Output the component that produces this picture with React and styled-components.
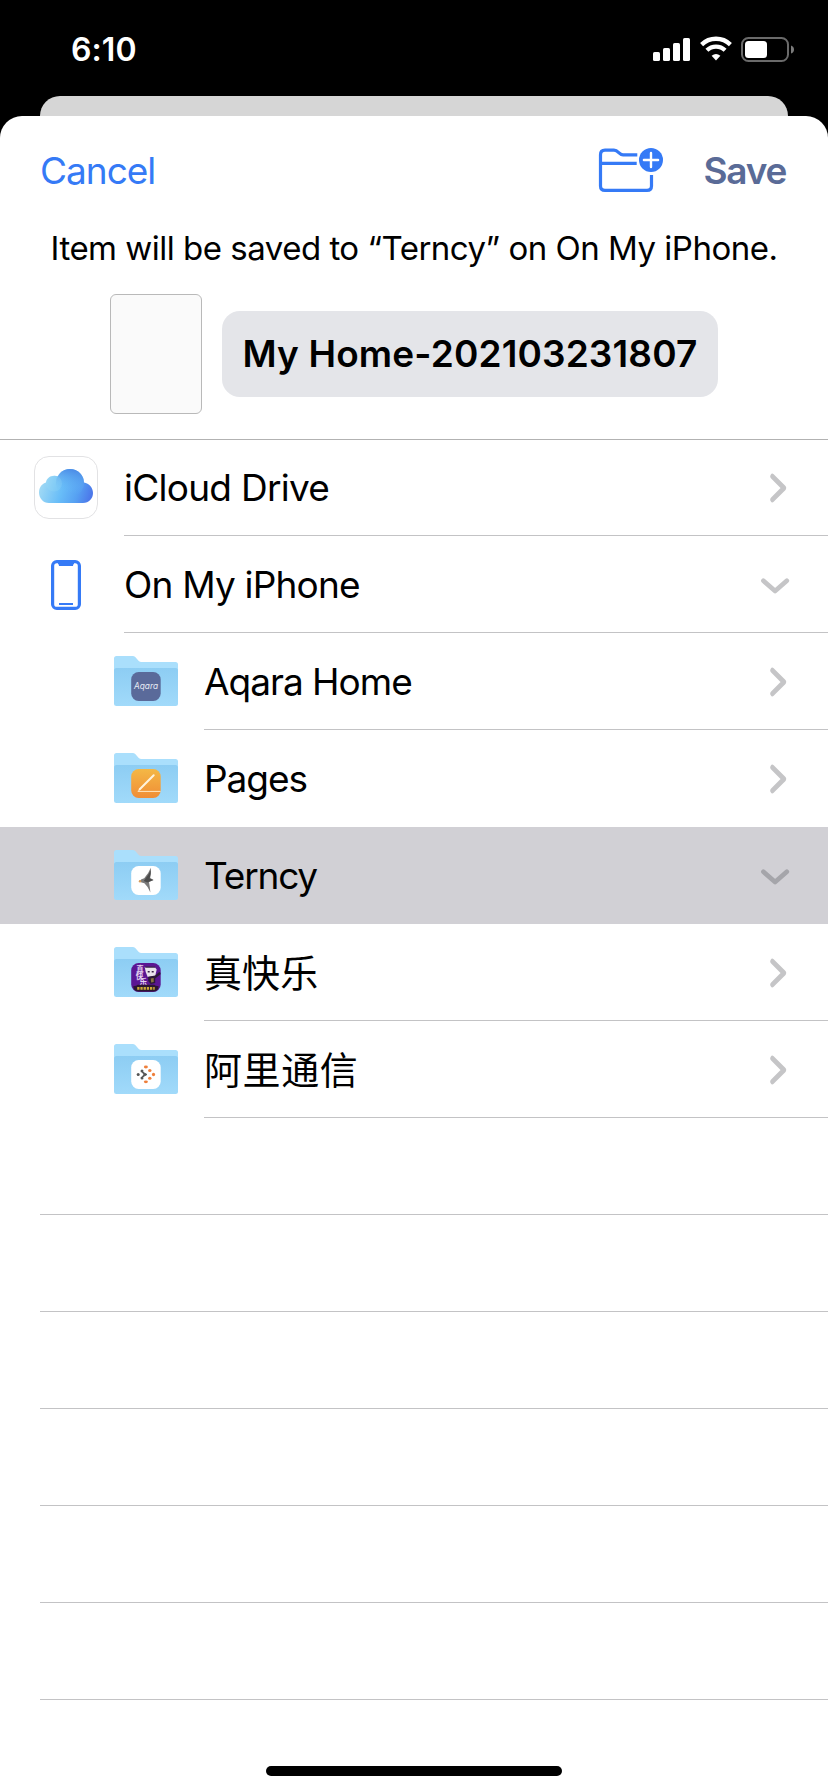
import React from "react";
import styled, { createGlobalStyle } from "styled-components";

const BLUE = "#357af6";

const GlobalStyle = createGlobalStyle`
  * { box-sizing: border-box; }
  body {
    margin: 0;
    background: #000;
    font-family: Inter, "Noto Sans CJK SC", sans-serif;
    color: #000;
  }
  svg { display: block; flex: none; }
`;

const Screen = styled.main`
  width: 828px;
  height: 1792px;
  display: flex;
  flex-direction: column;
  background: #000;
  overflow: hidden;
`;

const StatusBar = styled.header`
  height: 96px;
  flex: none;
  display: flex;
  justify-content: space-between;
  padding: 30px 33px 0 71px;
`;

const Clock = styled.time`
  font-size: 32px;
  line-height: 40px;
  font-weight: 600;
  letter-spacing: 0.1px;
  color: #fff;
`;

const StatusIcons = styled.div`
  display: flex;
  align-items: flex-start;
  gap: 9px;
  padding-top: 6px;
`;

const BackCard = styled.div`
  flex: none;
  height: 20px;
  margin: 0 40px;
  border-radius: 20px 20px 0 0;
  background: #d6d6d6;
`;

const Sheet = styled.section`
  flex: 1;
  display: flex;
  flex-direction: column;
  border-radius: 22px 22px 0 0;
  background: #fff;
`;

const NavBar = styled.nav`
  height: 109px;
  flex: none;
  display: flex;
  align-items: center;
  padding: 0 42px 0 40px;
`;

const NavButton = styled.button`
  border: 0;
  padding: 0;
  background: none;
  font: inherit;
  font-size: 37px;
  line-height: 48px;
  font-weight: ${(p) => (p.$strong ? 600 : 400)};
  letter-spacing: ${(p) => (p.$strong ? "-1.3px" : "-1px")};
  color: ${(p) => (p.$strong ? "#5a6b97" : BLUE)};
`;

const NewFolderButton = styled.button`
  border: 0;
  padding: 0;
  background: none;
  margin: 0 39.5px 1px auto;
`;

const Message = styled.p`
  margin: 0;
  height: 46px;
  text-align: center;
  font-size: 33px;
  line-height: 46px;
  letter-spacing: -0.5px;
  white-space: nowrap;
`;

const FileRow = styled.div`
  height: 169px;
  flex: none;
  display: flex;
  align-items: center;
  gap: 20px;
  padding: 0 110px 3px;
  border-bottom: 1px solid #b2b2b2;
`;

const Thumbnail = styled.div`
  width: 92px;
  height: 120px;
  flex: none;
  border: 1px solid #b9b9b9;
  border-radius: 6px;
  background: #fafafa;
`;

const NameField = styled.div`
  width: 496px;
  height: 86px;
  flex: none;
  padding-left: 20.5px;
  border-radius: 18px;
  background: #e4e5e9;
  font-size: 37px;
  line-height: 86px;
  font-weight: 600;
  letter-spacing: 0.14px;
  white-space: nowrap;
`;

const List = styled.ul`
  list-style: none;
  margin: 0;
  padding: 0;
`;

const Row = styled.li`
  height: ${(p) => (p.$first ? 96 : 97)}px;
  display: flex;
  gap: 26px;
  padding-left: ${(p) => (p.$nested ? 114 : 34)}px;
  background: ${(p) => (p.$selected ? "#d1d0d5" : "transparent")};
`;

const IconCell = styled.div`
  width: 64px;
  flex: none;
  display: flex;
  align-items: center;
  justify-content: center;
  padding-top: ${(p) => (p.$low ? 1 : 0)}px;
  padding-bottom: ${(p) => (p.$low ? 0 : 1)}px;
`;

const RowBody = styled.div`
  flex: 1;
  display: flex;
  align-items: center;
  justify-content: space-between;
  padding-top: ${(p) => (p.$first ? 0 : 2)}px;
  padding-right: 38px;
  border-bottom: 1px solid ${(p) => (p.$line ? "#c3c3c5" : "transparent")};
`;

const Label = styled.span`
  font-size: ${(p) => (p.$cjk ? 38 : 37)}px;
  line-height: 48px;
  letter-spacing: ${(p) => p.$tracking}px;
  white-space: nowrap;
`;

const EmptyRow = styled.li`
  height: 97px;
  margin-left: 40px;
  border-bottom: 1px solid #c3c3c5;
`;

const HomeIndicator = styled.div`
  width: 296px;
  height: 10px;
  margin: auto auto 16px;
  border-radius: 5px;
  background: #000;
`;

const Signal = () => (
  <svg width="38" height="25" viewBox="0 0 38 25" fill="#fff">
    <rect x="0" y="16" width="7" height="9" rx="1.6" />
    <rect x="10" y="12" width="7" height="13" rx="1.6" />
    <rect x="20" y="7" width="7" height="18" rx="1.6" />
    <rect x="30" y="2" width="7" height="23" rx="1.6" />
  </svg>
);

const Wifi = () => (
  <svg width="32" height="25" viewBox="0 0 32 25" fill="none" stroke="#fff">
    <path d="M1.6 8.6A20.6 20.6 0 0 1 30.4 8.6" strokeWidth="4.3" />
    <path d="M6.9 14.3A13 13 0 0 1 25.1 14.3" strokeWidth="4.2" />
    <path d="M11.6 19.8Q16 16.2 20.4 19.8L16 24.4Z" fill="#fff" stroke="none" />
  </svg>
);

const Battery = () => (
  <svg width="54" height="26" viewBox="0 0 54 26">
    <rect x="1" y="2" width="46" height="23" rx="6.5" fill="none" stroke="#6a6a6a" strokeWidth="2" />
    <rect x="4" y="5" width="22" height="17" rx="3.5" fill="#fff" />
    <path d="M50 9.5Q53 10.5 53 13.5T50 17.5Z" fill="#7b7b7b" />
  </svg>
);

const NewFolderIcon = () => (
  <svg width="66" height="46" viewBox="0 0 66 46" fill="none" stroke={BLUE} strokeWidth="3.2">
    <path d="M39.3 7.8H25C20.8 7.8 20.6 3.2 16 3.2H7Q2.5 3.2 2.5 7.7V39Q2.5 43.4 7 43.4H49Q53.5 43.4 53.5 39V28" />
    <path d="M2.5 16.4H38.7" />
    <circle cx="53" cy="13" r="12" fill={BLUE} stroke="none" />
    <path d="M53 5.9V20.1M45.9 13H60.1" stroke="#fff" strokeWidth="2.4" strokeLinecap="round" />
  </svg>
);

const CloudIcon = () => (
  <svg width="64" height="63" viewBox="0 0 64 63">
    <defs>
      <linearGradient id="cloud" x1="0" y1="0.4" x2="1" y2="0.6">
        <stop offset="0" stopColor="#a6dcf4" />
        <stop offset="0.45" stopColor="#68bdf8" />
        <stop offset="0.75" stopColor="#56a0f2" />
        <stop offset="1" stopColor="#4c78ea" />
      </linearGradient>
      <linearGradient id="puff" x1="0.6" y1="0" x2="0.4" y2="1">
        <stop offset="0" stopColor="#4b8ae6" />
        <stop offset="0.85" stopColor="#67bcf8" stopOpacity="0" />
      </linearGradient>
    </defs>
    <rect x="0.5" y="0.5" width="63" height="62" rx="14.5" fill="#fff" stroke="#e2e2e4" />
    <path
      d="M15 47C9 47 5 42 5 36.5C5 31 8.3 27.5 12 26.5C12.5 21.500 18 18.3 24 20.2C26.5 15.5 31 13 36 13C43.5 13 49.5 18.5 50 26.5C55 27.5 59 31.5 59 37C59 42.5 55 47 49 47Z"
      fill="url(#cloud)"
    />
    <circle cx="36" cy="27" r="14" fill="url(#puff)" />
    <circle cx="20" cy="27.5" r="8" fill="#9ce0f8" opacity="0.22" />
  </svg>
);

const PhoneIcon = () => (
  <svg width="30" height="50" viewBox="0 0 30 50">
    <rect x="1.6" y="1.6" width="26.8" height="46.8" rx="4.2" fill="none" stroke={BLUE} strokeWidth="3.2" />
    <path d="M7 2H23V4Q22 4 22 6H8Q8 4 7 4Z" fill={BLUE} />
    <path d="M8 44H22" stroke={BLUE} strokeWidth="2" />
  </svg>
);

const AqaraBadge = () => (
  <>
    <rect width="29.5" height="29" rx="7.5" fill="#5a6a9a" />
    <text x="14.8" y="16.6" textAnchor="middle" fontSize="8.6" textLength="24" lengthAdjust="spacingAndGlyphs" fill="#e6eaf4" fontStyle="italic">
      Aqara
    </text>
  </>
);

const PagesBadge = () => (
  <>
    <defs>
      <linearGradient id="pages" x1="0" y1="0" x2="0" y2="1">
        <stop offset="0" stopColor="#f4b845" />
        <stop offset="1" stopColor="#f08d36" />
      </linearGradient>
    </defs>
    <rect width="29.5" height="29" rx="7.5" fill="url(#pages)" />
    <path d="M8.5 20.3L22.5 6.3" stroke="#fff3dc" strokeWidth="2" strokeLinecap="round" />
    <path d="M6.5 22.4H29.3" stroke="#ffe9c4" strokeWidth="1" />
    <path d="M6.8 22.2L8.2 19.6L9.4 20.8Z" fill="#fff3dc" />
  </>
);

const TerncyBadge = () => (
  <>
    <rect width="29.5" height="29" rx="7.5" fill="#fff" />
    <path d="M8 15.5Q10 12.800 13 12.300Q17.200 8 19.600 1.800Q20.300 6.500 19 12L22.300 14L17.800 16Q18.800 21.500 19.200 26.500Q16.800 20.500 13.200 17.300Q10.500 16.800 8 15.500Z" fill="#7a7a7a" />
    <path d="M15 11.500Q18 8 19.400 4Q19.700 8 18.400 12.500L22.300 14L16 16.500L12.500 15Z" fill="#4c4c4c" />
    <circle cx="8.8" cy="15.3" r="1.2" fill="#d39a5a" />
  </>
);

const HappyBadge = () => (
  <>
    <rect width="29.5" height="29" rx="7.5" fill="#5b1693" />
    <g fill="#e4d3f0" fontSize="7.5" fontWeight="700">
      <text x="5" y="8.6">真</text>
      <text x="4.6" y="15.8">快</text>
      <text x="8.4" y="22">乐</text>
    </g>
    <path d="M13.500 4H23.5L25.5 6.5L24 13L16.500 14L14.5 9Z" fill="#eae4ec" />
    <path d="M14 3.500H24V4.700H14ZM16.500 8H18.5V9.4H16.500ZM20.5 8H22.500V9.4H20.5Z" fill="#3a2448" />
    <path d="M17 13.800L24 12.5L28 9L29.3 9.7V11.2L24 15.500V20L19.500 21L17 18Z" fill="#2c1a36" />
    <path d="M19.5 15.5L22.5 15V19L20 19.5Z" fill="#8a7440" />
    <path d="M2 23.200L5 22.800L6.500 21.800H23L24.500 22.800L27.500 23.200Q27 28.600 22 28.600H7.5Q2.500 28.600 2 23.200Z" fill="#2c1730" />
    <path d="M6 25.400H23.500" stroke="#cdaa38" strokeWidth="2.600" strokeDasharray="2.300 0.900" />
  </>
);

const AliBadge = () => (
  <>
    <rect width="29.5" height="29" rx="7.5" fill="#fff" />
    <g fill="#ee7f3b">
      <ellipse cx="14.7" cy="7" rx="2" ry="1.4" />
      <ellipse cx="18.6" cy="10.6" rx="1.7" ry="1.5" />
      <ellipse cx="22.3" cy="14.5" rx="1.6" ry="1.7" />
      <ellipse cx="18.6" cy="18.3" rx="1.7" ry="1.5" />
      <ellipse cx="14.7" cy="21.8" rx="2" ry="1.4" />
    </g>
    <g fill="#555">
      <circle cx="7" cy="14.5" r="1.5" />
      <circle cx="10.8" cy="10.9" r="1.5" />
      <circle cx="10.8" cy="18.1" r="1.5" />
      <path d="M11.2 12L15.8 14.5L11.2 17L12.6 14.5Z" stroke="#555" strokeWidth="1" />
    </g>
  </>
);

const FolderIcon = ({ children }) => (
  <svg width="64" height="50" viewBox="0 0 64 50">
    <defs>
      <linearGradient id="front" x1="0" y1="0" x2="0" y2="1">
        <stop offset="0" stopColor="#8dcdf3" />
        <stop offset="1" stopColor="#a1dafa" />
      </linearGradient>
    </defs>
    <path d="M0 2.5Q0 0 2.5 0H18.5Q20.3 0 21.5 1.3L24.5 4.7Q25.8 6 27.5 6H61.5Q64 6 64 8.5V20H0Z" fill="#aadffc" />
    <path d="M0 14.5Q0 12 2.5 12H61.5Q64 12 64 14.5V47.5Q64 50 61.5 50H2.5Q0 50 0 47.5Z" fill="url(#front)" />
    <g transform="translate(17.2 16)">{children}</g>
  </svg>
);

const ChevronRight = () => (
  <svg width="20" height="30" viewBox="0 0 20 30">
    <path d="M2.4 6.2L14 15L2.4 23.8" transform="matrix(1 0 0 1.32 0 -4.8)" fill="none" stroke="#c5c5c7" strokeWidth="4.2" strokeLinecap="round" strokeLinejoin="round" />
  </svg>
);

const ChevronDown = ({ color }) => (
  <svg width="30" height="20" viewBox="0 0 30 20">
    <path d="M3.4 5.8L15.1 16L26.8 5.8" fill="none" stroke={color} strokeWidth="4.7" strokeLinecap="round" strokeLinejoin="round" />
  </svg>
);

const LOCATIONS = [
  { name: "iCloud Drive", icon: <CloudIcon />, tracking: -0.73, line: true },
  { name: "On My iPhone", icon: <PhoneIcon />, tracking: -0.81, line: true, open: true },
  { name: "Aqara Home", badge: <AqaraBadge />, tracking: -1, line: true },
  { name: "Pages", badge: <PagesBadge />, tracking: -1.05 },
  { name: "Terncy", badge: <TerncyBadge />, tracking: -1.2, open: true, selected: true },
  { name: "真快乐", badge: <HappyBadge />, tracking: 0.1, line: true, cjk: true },
  { name: "阿里通信", badge: <AliBadge />, tracking: 0.6, line: true, cjk: true },
];

export default function App() {
  return (
    <>
      <GlobalStyle />
      <Screen>
        <StatusBar>
          <Clock>6:10</Clock>
          <StatusIcons>
            <Signal />
            <Wifi />
            <Battery />
          </StatusIcons>
        </StatusBar>
        <BackCard />
        <Sheet>
          <NavBar>
            <NavButton>Cancel</NavButton>
            <NewFolderButton aria-label="New folder">
              <NewFolderIcon />
            </NewFolderButton>
            <NavButton $strong>Save</NavButton>
          </NavBar>
          <Message>Item will be saved to “Terncy” on On My iPhone.</Message>
          <FileRow>
            <Thumbnail />
            <NameField>My Home-202103231807</NameField>
          </FileRow>
          <List>
            {LOCATIONS.map((l, i) => (
              <Row key={l.name} $first={i === 0} $nested={!!l.badge} $selected={l.selected}>
                <IconCell $low={i === 1}>{l.badge ? <FolderIcon>{l.badge}</FolderIcon> : l.icon}</IconCell>
                <RowBody $line={l.line} $first={i === 0}>
                  <Label $cjk={l.cjk} $tracking={l.tracking}>{l.name}</Label>
                  {l.open ? <ChevronDown color={l.selected ? "#a5a5aa" : "#c5c5c7"} /> : <ChevronRight />}
                </RowBody>
              </Row>
            ))}
            {Array.from({ length: 6 }, (_, i) => (
              <EmptyRow key={i} />
            ))}
          </List>
          <HomeIndicator />
        </Sheet>
      </Screen>
    </>
  );
}
